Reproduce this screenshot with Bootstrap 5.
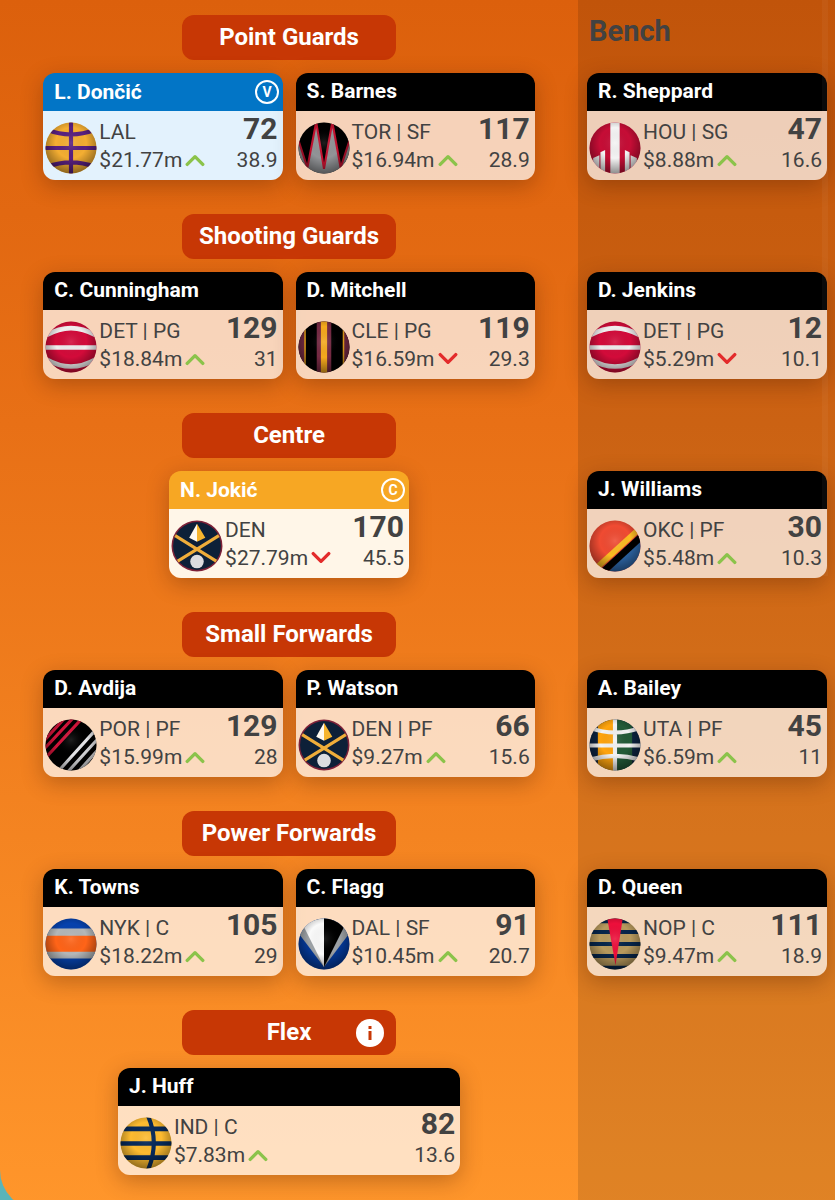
<!DOCTYPE html>
<html lang="en">
<head>
<meta charset="utf-8">
<meta name="viewport" content="width=device-width, initial-scale=1">
<title>Fantasy Team</title>
<link href="https://cdn.jsdelivr.net/npm/bootstrap@5.3.0/dist/css/bootstrap.min.css" rel="stylesheet">
<style>
body { font-family: Roboto, "Liberation Sans", sans-serif; background: #5ab4b8; color: #424242; }
.team-scroll { scrollbar-width: none; }
.team-scroll::-webkit-scrollbar { display: none; }
.scroll-thumb { top: 0; right: 7px; width: 6px; height: 48%; background: rgba(255, 255, 255, .04); pointer-events: none; }
.team-panel {
  display: grid; grid-template-columns: 9fr 4fr; min-height: 1210px;
  background: linear-gradient(#dc600c, #e87016 35%, #ff962b); border-bottom-left-radius: 40px; overflow: hidden;
}
.court-side { padding-top: 15px; }
.bench-side { padding: 15px 8px 0 9px; background: rgba(0, 0, 0, .12); }
.slot-group { height: 199px; }
.bench-slot { padding-top: 58px; }
.slot-title {
  width: 214px; height: 45px; margin-bottom: 13px; border-radius: 12px;
  background: #c73705; color: #fff; font-size: 24px; line-height: 44px; font-weight: 700;
}
.slot-title h2 { font: inherit; }
.bench-title { height: 45px; margin: 0 0 13px 2px; font-size: 29px; line-height: 32px; font-weight: 700; }
.slot-row { width: 85%; display: grid; grid-template-columns: 1fr 1fr; gap: 13px; }
.slot-row.one-up { display: block; width: 41.5%; }
.slot-row.wide-up { display: block; width: 59.2%; }
.player { border-radius: 12px; overflow: hidden; box-shadow: 0 6px 22px rgba(60, 20, 0, .3); }
.player-head { height: 38px; padding: 0 4px 0 11px; background: #000; color: #fff; }
.player-name { font-size: 21px; line-height: 37px; font-weight: 700; }
.player-body { height: 69px; padding: 0 5px 0 2px; background: rgba(255, 255, 255, .71); font-size: 21px; line-height: 28px; }
.player-vice .player-head { background: #0275c6; }
.player-vice .player-body { background: #e3f2fd; }
.player-captain .player-head { background: #f7a723; }
.player-captain .player-body { background: #fff6e8; }
.ball { width: 52px; height: 52px; margin: 11px 2px 0 0; }
.meta { padding-top: 7px; }
.score { font-size: 30px; line-height: 35px; font-weight: 700; }
.trend { width: 20px; height: 14px; margin-left: 3px; fill: none; stroke-width: 3; stroke-linecap: round; stroke-linejoin: round; }
.trend-up { stroke: #8bc34a; }
.trend-down { stroke: #e32b2b; }
.role { width: 24px; height: 24px; }
.role text { font-size: 14px; font-weight: 700; fill: #fff; text-anchor: middle; }
.info-btn { right: 12px; top: 9px; width: 28px; height: 28px; }
</style>
</head>
<body>
<svg class="position-absolute" width="0" height="0" aria-hidden="true">
  <defs>
    <radialGradient id="shade" cx=".5" cy=".4" r=".6"><stop offset="0" stop-color="#fff" stop-opacity=".12"/><stop offset=".5" stop-color="#000" stop-opacity="0"/><stop offset="1" stop-color="#000" stop-opacity=".42"/></radialGradient>
    <clipPath id="disc"><circle cx="50" cy="50" r="49"/></clipPath>
    <symbol id="b-lal" viewBox="0 0 100 100"><g clip-path="url(#disc)"><path fill="#f4ae32" d="M0 0h100v100H0z"/><path fill="none" stroke="#582080" stroke-width="8" d="M50 0v100M0 50h100M4 15q46 18 92 0M4 86q46-17 92 0"/></g><circle cx="50" cy="50" r="49" fill="url(#shade)"/></symbol>
    <symbol id="b-tor" viewBox="0 0 100 100"><g clip-path="url(#disc)"><path d="M0 0h100v100H0z"/><path fill="#929497" stroke="#c41230" stroke-width="4" d="M-8 8 18 88 35 0 50 90 66 0 82 88 108 8V120H-8z"/></g><circle cx="50" cy="50" r="49" fill="url(#shade)"/></symbol>
    <symbol id="b-hou" viewBox="0 0 100 100"><g clip-path="url(#disc)"><path fill="#c60d36" d="M0 0h100v100H0z"/><path fill="#f4f4f4" d="M41 0h18v100H41zM8 69l12-5v36H8zM22 58l9-4v46h-9zM69 54l9 4v42h-9zM80 64l12 5v31H80z"/></g><circle cx="50" cy="50" r="49" fill="url(#shade)"/></symbol>
    <symbol id="b-det" viewBox="0 0 100 100"><g clip-path="url(#disc)"><path fill="#d30b3a" d="M0 0h100v100H0z"/><path fill="none" stroke="#f0eeee" stroke-width="9" d="M0 51h100M3 27q47-27 94 0M3 74q47 27 94 0"/></g><circle cx="50" cy="50" r="49" fill="url(#shade)"/></symbol>
    <symbol id="b-cle" viewBox="0 0 100 100"><g clip-path="url(#disc)"><path d="M0 0h100v100H0z"/><path fill="#752a43" d="M0 0h13v100H0zM36 0h28v100H36zM88 0h12v100H88z"/><path fill="#f5a91d" d="M44 0h12v100H44zM12 0h3v100h-3zM86 0h3v100h-3z"/></g><circle cx="50" cy="50" r="49" fill="url(#shade)"/></symbol>
    <symbol id="b-den" viewBox="0 0 100 100"><circle cx="50" cy="50" r="49" fill="#7d2138"/><circle cx="50" cy="50" r="46" fill="#0d2038"/><path stroke="#efad3a" stroke-width="6" d="M8 30 87 79M92 30 13 79"/><path fill="#fffaf0" d="M50 7 35 34l15 8z"/><path fill="#f7b52e" d="M50 7 66 34l-16 8z"/><circle cx="50" cy="80" r="13" fill="#dcdce0"/></symbol>
    <symbol id="b-okc" viewBox="0 0 100 100"><g clip-path="url(#disc)"><path fill="#f04b32" d="M0 0h100v100H0z"/><path fill="#2e68aa" d="M100 30 30 108h90z"/><path stroke="#000" stroke-width="13" d="M20 106 108 25"/><path stroke="#fdbb22" stroke-width="11" d="M8 98 102 12"/></g><circle cx="50" cy="50" r="49" fill="url(#shade)"/></symbol>
    <symbol id="b-por" viewBox="0 0 100 100"><g clip-path="url(#disc)"><path d="M0 0h100v100H0z"/><path stroke="#d2143a" stroke-width="6" d="M-4 44 40-4M-4 60 56-4M0 76 74-4"/><path stroke="#e5e5e8" stroke-width="6" d="M26 100 100 18M40 106 108 31M58 108 112 48"/></g><circle cx="50" cy="50" r="49" fill="url(#shade)"/></symbol>
    <symbol id="b-uta" viewBox="0 0 100 100"><g clip-path="url(#disc)"><path fill="#0c2340" d="M0 0h100v100H0z"/><path fill="#ffa40d" d="M17 0h30v100H17z"/><path fill="#235b38" d="M54 0h29v100H54z"/><path fill="none" stroke="#f3f3f3" stroke-width="8" d="M50 0v100M0 51h100M2 17q48 18 96 0M2 78q48-14 96 0"/></g><circle cx="50" cy="50" r="49" fill="url(#shade)"/></symbol>
    <symbol id="b-nyk" viewBox="0 0 100 100"><g clip-path="url(#disc)"><path fill="#0642ad" d="M0 0h100v100H0z"/><path fill="#b3b7b9" d="M0 20h100v58H0z"/><path fill="#ff6418" d="M0 34h100v31H0z"/></g><circle cx="50" cy="50" r="49" fill="url(#shade)"/></symbol>
    <symbol id="b-dal" viewBox="0 0 100 100"><g clip-path="url(#disc)"><path fill="#043a9c" d="M0 0h100v100H0z"/><path fill="#9da2a6" d="M-6 20 50 94 106 20V0H-6z"/><path fill="#fafafa" d="M8 10 50 94V0z"/><path d="M50 0v94L92 10V0z"/></g><circle cx="50" cy="50" r="49" fill="url(#shade)"/></symbol>
    <symbol id="b-nop" viewBox="0 0 100 100"><g clip-path="url(#disc)"><path fill="#b89a5d" d="M0 0h100v100H0z"/><path fill="#06254a" d="M0 0h100v10H0zM0 23h100v8H0zM0 46h100v8H0zM0 69h100v8H0zM0 92h100v8H0z"/><path fill="#ee0f3b" d="M35 0h30L51 91z"/></g><circle cx="50" cy="50" r="49" fill="url(#shade)"/></symbol>
    <symbol id="b-ind" viewBox="0 0 100 100"><g clip-path="url(#disc)"><path fill="#fdbb30" d="M0 0h100v100H0z"/><path fill="none" stroke="#06295a" stroke-width="9" d="M0 23h100M0 51h100M0 78h100"/><path fill="none" stroke="#06295a" stroke-width="8" d="M54-2q22 51 0 104"/></g><circle cx="50" cy="50" r="49" fill="url(#shade)"/></symbol>
    <symbol id="up" viewBox="0 0 18 12"><path d="M2 10 9 3l7 7"/></symbol>
    <symbol id="down" viewBox="0 0 18 12"><path d="M2 2l7 7 7-7"/></symbol>
  </defs>
</svg>
<div class="team-scroll vh-100 overflow-auto">
<main class="team-panel">
  <div class="court-side">
    <section class="slot-group">
      <h2 class="slot-title mx-auto text-center">Point Guards</h2>
      <div class="slot-row mx-auto">
        <article class="player player-vice">
          <header class="player-head d-flex justify-content-between align-items-center"><h3 class="player-name m-0">L. Dončić</h3>
            <svg class="role" viewBox="0 0 24 24"><circle cx="12" cy="12" r="11" fill="none" stroke="#fff" stroke-width="2"/><text x="12" y="17">V</text></svg></header>
          <div class="player-body d-flex"><svg class="ball flex-shrink-0"><use href="#b-lal"/></svg><div class="meta text-nowrap"><div>LAL</div><div class="d-flex align-items-center">$21.77m<svg class="trend trend-up"><use href="#up"/></svg></div></div><div class="ms-auto text-end"><div class="score">72</div><div>38.9</div></div></div>
        </article>
        <article class="player">
          <header class="player-head"><h3 class="player-name m-0">S. Barnes</h3></header>
          <div class="player-body d-flex"><svg class="ball flex-shrink-0"><use href="#b-tor"/></svg><div class="meta text-nowrap"><div>TOR | SF</div><div class="d-flex align-items-center">$16.94m<svg class="trend trend-up"><use href="#up"/></svg></div></div><div class="ms-auto text-end"><div class="score">117</div><div>28.9</div></div></div>
        </article>
      </div>
    </section>
    <section class="slot-group">
      <h2 class="slot-title mx-auto text-center">Shooting Guards</h2>
      <div class="slot-row mx-auto">
        <article class="player">
          <header class="player-head"><h3 class="player-name m-0">C. Cunningham</h3></header>
          <div class="player-body d-flex"><svg class="ball flex-shrink-0"><use href="#b-det"/></svg><div class="meta text-nowrap"><div>DET | PG</div><div class="d-flex align-items-center">$18.84m<svg class="trend trend-up"><use href="#up"/></svg></div></div><div class="ms-auto text-end"><div class="score">129</div><div>31</div></div></div>
        </article>
        <article class="player">
          <header class="player-head"><h3 class="player-name m-0">D. Mitchell</h3></header>
          <div class="player-body d-flex"><svg class="ball flex-shrink-0"><use href="#b-cle"/></svg><div class="meta text-nowrap"><div>CLE | PG</div><div class="d-flex align-items-center">$16.59m<svg class="trend trend-down"><use href="#down"/></svg></div></div><div class="ms-auto text-end"><div class="score">119</div><div>29.3</div></div></div>
        </article>
      </div>
    </section>
    <section class="slot-group">
      <h2 class="slot-title mx-auto text-center">Centre</h2>
      <div class="slot-row one-up mx-auto">
        <article class="player player-captain">
          <header class="player-head d-flex justify-content-between align-items-center"><h3 class="player-name m-0">N. Jokić</h3>
            <svg class="role" viewBox="0 0 24 24"><circle cx="12" cy="12" r="11" fill="none" stroke="#fff" stroke-width="2"/><text x="12" y="17">C</text></svg></header>
          <div class="player-body d-flex"><svg class="ball flex-shrink-0"><use href="#b-den"/></svg><div class="meta text-nowrap"><div>DEN</div><div class="d-flex align-items-center">$27.79m<svg class="trend trend-down"><use href="#down"/></svg></div></div><div class="ms-auto text-end"><div class="score">170</div><div>45.5</div></div></div>
        </article>
      </div>
    </section>
    <section class="slot-group">
      <h2 class="slot-title mx-auto text-center">Small Forwards</h2>
      <div class="slot-row mx-auto">
        <article class="player">
          <header class="player-head"><h3 class="player-name m-0">D. Avdija</h3></header>
          <div class="player-body d-flex"><svg class="ball flex-shrink-0"><use href="#b-por"/></svg><div class="meta text-nowrap"><div>POR | PF</div><div class="d-flex align-items-center">$15.99m<svg class="trend trend-up"><use href="#up"/></svg></div></div><div class="ms-auto text-end"><div class="score">129</div><div>28</div></div></div>
        </article>
        <article class="player">
          <header class="player-head"><h3 class="player-name m-0">P. Watson</h3></header>
          <div class="player-body d-flex"><svg class="ball flex-shrink-0"><use href="#b-den"/></svg><div class="meta text-nowrap"><div>DEN | PF</div><div class="d-flex align-items-center">$9.27m<svg class="trend trend-up"><use href="#up"/></svg></div></div><div class="ms-auto text-end"><div class="score">66</div><div>15.6</div></div></div>
        </article>
      </div>
    </section>
    <section class="slot-group">
      <h2 class="slot-title mx-auto text-center">Power Forwards</h2>
      <div class="slot-row mx-auto">
        <article class="player">
          <header class="player-head"><h3 class="player-name m-0">K. Towns</h3></header>
          <div class="player-body d-flex"><svg class="ball flex-shrink-0"><use href="#b-nyk"/></svg><div class="meta text-nowrap"><div>NYK | C</div><div class="d-flex align-items-center">$18.22m<svg class="trend trend-up"><use href="#up"/></svg></div></div><div class="ms-auto text-end"><div class="score">105</div><div>29</div></div></div>
        </article>
        <article class="player">
          <header class="player-head"><h3 class="player-name m-0">C. Flagg</h3></header>
          <div class="player-body d-flex"><svg class="ball flex-shrink-0"><use href="#b-dal"/></svg><div class="meta text-nowrap"><div>DAL | SF</div><div class="d-flex align-items-center">$10.45m<svg class="trend trend-up"><use href="#up"/></svg></div></div><div class="ms-auto text-end"><div class="score">91</div><div>20.7</div></div></div>
        </article>
      </div>
    </section>
    <section class="slot-group">
      <div class="slot-title mx-auto text-center position-relative"><h2 class="m-0">Flex</h2>
        <button type="button" class="info-btn btn p-0 border-0 d-flex position-absolute" aria-label="About flex"><svg width="28" height="28" viewBox="0 0 28 28"><circle cx="14" cy="14" r="14" fill="#fff"/><path fill="#c73705" d="M12.500 7h3v3h-3zM12.500 12h3v9h-3z"/></svg></button></div>
      <div class="slot-row wide-up mx-auto">
        <article class="player">
          <header class="player-head"><h3 class="player-name m-0">J. Huff</h3></header>
          <div class="player-body d-flex"><svg class="ball flex-shrink-0"><use href="#b-ind"/></svg><div class="meta text-nowrap"><div>IND | C</div><div class="d-flex align-items-center">$7.83m<svg class="trend trend-up"><use href="#up"/></svg></div></div><div class="ms-auto text-end"><div class="score">82</div><div>13.6</div></div></div>
        </article>
      </div>
    </section>
  </div>
  <aside class="bench-side">
    <div class="slot-group">
      <h2 class="bench-title">Bench</h2>
      <article class="player">
        <header class="player-head"><h3 class="player-name m-0">R. Sheppard</h3></header>
        <div class="player-body d-flex"><svg class="ball flex-shrink-0"><use href="#b-hou"/></svg><div class="meta text-nowrap"><div>HOU | SG</div><div class="d-flex align-items-center">$8.88m<svg class="trend trend-up"><use href="#up"/></svg></div></div><div class="ms-auto text-end"><div class="score">47</div><div>16.6</div></div></div>
      </article>
    </div>
    <div class="slot-group bench-slot">
      <article class="player">
        <header class="player-head"><h3 class="player-name m-0">D. Jenkins</h3></header>
        <div class="player-body d-flex"><svg class="ball flex-shrink-0"><use href="#b-det"/></svg><div class="meta text-nowrap"><div>DET | PG</div><div class="d-flex align-items-center">$5.29m<svg class="trend trend-down"><use href="#down"/></svg></div></div><div class="ms-auto text-end"><div class="score">12</div><div>10.1</div></div></div>
      </article>
    </div>
    <div class="slot-group bench-slot">
      <article class="player">
        <header class="player-head"><h3 class="player-name m-0">J. Williams</h3></header>
        <div class="player-body d-flex"><svg class="ball flex-shrink-0"><use href="#b-okc"/></svg><div class="meta text-nowrap"><div>OKC | PF</div><div class="d-flex align-items-center">$5.48m<svg class="trend trend-up"><use href="#up"/></svg></div></div><div class="ms-auto text-end"><div class="score">30</div><div>10.3</div></div></div>
      </article>
    </div>
    <div class="slot-group bench-slot">
      <article class="player">
        <header class="player-head"><h3 class="player-name m-0">A. Bailey</h3></header>
        <div class="player-body d-flex"><svg class="ball flex-shrink-0"><use href="#b-uta"/></svg><div class="meta text-nowrap"><div>UTA | PF</div><div class="d-flex align-items-center">$6.59m<svg class="trend trend-up"><use href="#up"/></svg></div></div><div class="ms-auto text-end"><div class="score">45</div><div>11</div></div></div>
      </article>
    </div>
    <div class="slot-group bench-slot">
      <article class="player">
        <header class="player-head"><h3 class="player-name m-0">D. Queen</h3></header>
        <div class="player-body d-flex"><svg class="ball flex-shrink-0"><use href="#b-nop"/></svg><div class="meta text-nowrap"><div>NOP | C</div><div class="d-flex align-items-center">$9.47m<svg class="trend trend-up"><use href="#up"/></svg></div></div><div class="ms-auto text-end"><div class="score">111</div><div>18.9</div></div></div>
      </article>
    </div>
  </aside>
</main>
</div>
<div class="scroll-thumb position-fixed"></div>
<script src="https://cdn.jsdelivr.net/npm/bootstrap@5.3.0/dist/js/bootstrap.bundle.min.js"></script>
</body>
</html>
